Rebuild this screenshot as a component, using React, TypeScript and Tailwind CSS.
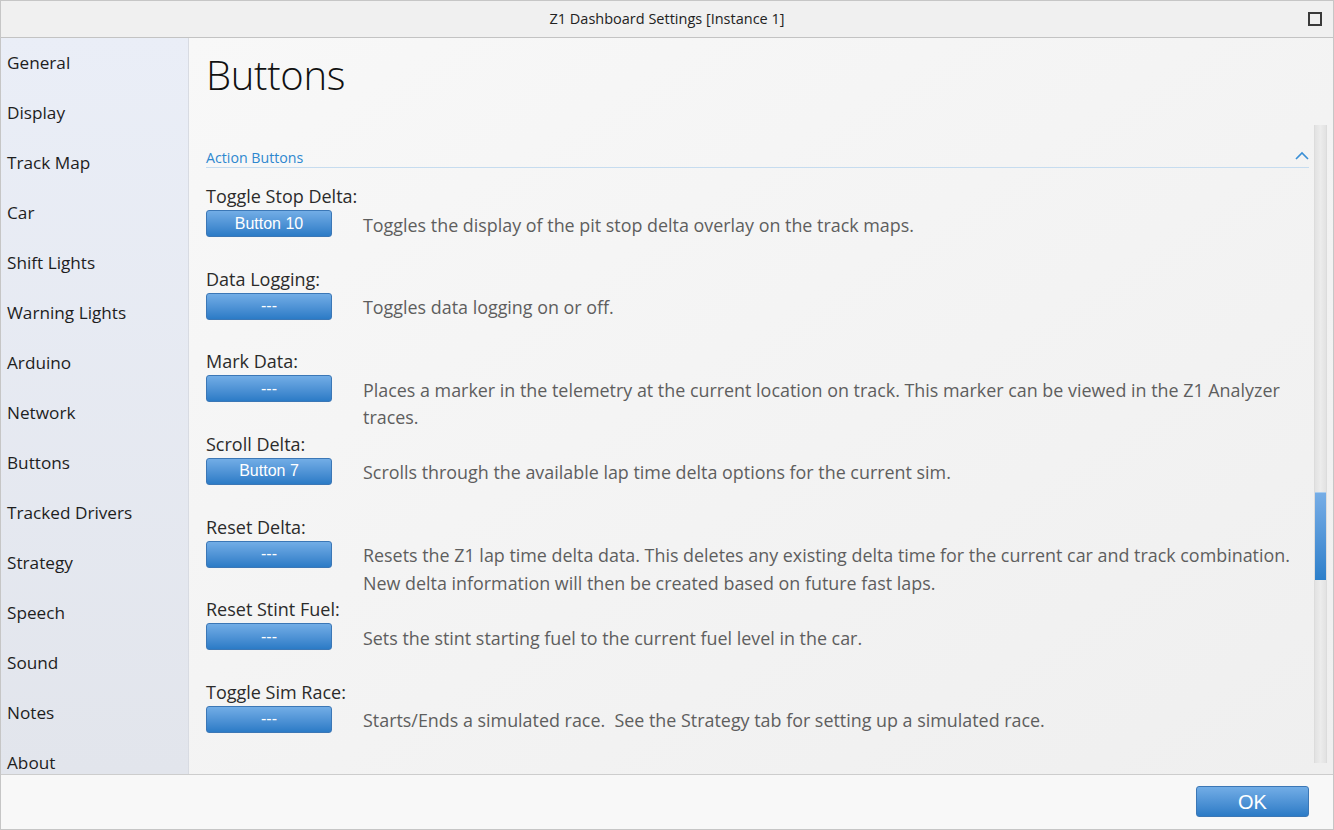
import React from "react";

const navItems = [
  "General",
  "Display",
  "Track Map",
  "Car",
  "Shift Lights",
  "Warning Lights",
  "Arduino",
  "Network",
  "Buttons",
  "Tracked Drivers",
  "Strategy",
  "Speech",
  "Sound",
  "Notes",
  "About",
];

const rows: { label: string; button: string; desc: string[] }[] = [
  { label: "Toggle Stop Delta:", button: "Button 10", desc: ["Toggles the display of the pit stop delta overlay on the track maps."] },
  { label: "Data Logging:", button: "---", desc: ["Toggles data logging on or off."] },
  {
    label: "Mark Data:",
    button: "---",
    desc: ["Places a marker in the telemetry at the current location on track. This marker can be viewed in the Z1 Analyzer", "traces."],
  },
  { label: "Scroll Delta:", button: "Button 7", desc: ["Scrolls through the available lap time delta options for the current sim."] },
  {
    label: "Reset Delta:",
    button: "---",
    desc: [
      "Resets the Z1 lap time delta data. This deletes any existing delta time for the current car and track combination.",
      "New delta information will then be created based on future fast laps.",
    ],
  },
  { label: "Reset Stint Fuel:", button: "---", desc: ["Sets the stint starting fuel to the current fuel level in the car."] },
  { label: "Toggle Sim Race:", button: "---", desc: ["Starts/Ends a simulated race.\u00a0 See the Strategy tab for setting up a simulated race."] },
];

export default function App() {
  return (
    <div
      className="w-[1334px] h-[830px] flex flex-col overflow-hidden border border-[#c6c6c6] bg-[#f4f4f4]"
      style={{ fontFamily: '"Open Sans", "Noto Sans", sans-serif' }}
    >
      {/* Title bar */}
      <div className="h-[37px] shrink-0 flex items-center justify-center relative bg-[#f0f0f0] border-b border-[#c3c3c3]">
        <span className="text-[14.5px] text-[#222]">Z1 Dashboard Settings [Instance 1]</span>
        <div className="absolute right-[11px] top-[11px] w-[14px] h-[14px] border-2 border-[#3a3a3a]" />
      </div>

      {/* Middle */}
      <div className="flex-1 flex min-h-0">
        {/* Sidebar */}
        <div className="w-[188px] shrink-0 bg-gradient-to-b from-[#eaeef7] to-[#e2e5ec] border-r border-[#d8dbe2] overflow-hidden">
          {navItems.map((n) => (
            <div key={n} className="h-[50px] flex items-center pl-[6px] text-[17.2px] text-[#1e1e1e]">
              {n}
            </div>
          ))}
        </div>

        {/* Content */}
        <div className="flex-1 flex flex-col min-w-0 bg-gradient-to-br from-[#f8f8f8] to-[#efefef]">
          <div className="h-[87px] shrink-0 pl-[17px] pt-[12px]">
            <div className="text-[40px] font-light leading-[50px] text-[#111] tracking-[-0.3px]">Buttons</div>
          </div>
          <div className="flex-1 flex min-h-0 pb-[11px]">
            <div className="flex-1 min-w-0 pl-[17px] pr-[5px] overflow-hidden">
              <div className="mt-[24px] h-[18px] flex items-center justify-between border-b border-[#c6dcef] box-content">
                <span className="text-[14.2px] text-[#2e87cf] leading-[18px] -mt-[1px]">Action Buttons</span>
                <svg width="14" height="9" viewBox="0 0 14 9" className="-mt-[6px]">
                  <path d="M1 8 L7 2 L13 8" fill="none" stroke="#3a8fd6" strokeWidth="1.6" />
                </svg>
              </div>
              <div className="mt-[16px]">
                {rows.map((r) => (
                  <div key={r.label} className="h-[82.67px]">
                    <div className="h-[26px] leading-[24px] text-[18px] text-[#2b2b2b]">{r.label}</div>
                    <div className="flex items-start">
                      <div
                        className="w-[126px] h-[27px] shrink-0 rounded-[3px] border border-[#3b77b6] bg-gradient-to-b from-[#72ade6] to-[#2b7bc6] flex items-center justify-center text-white text-[16px]"
                        style={{ fontFamily: '"Liberation Sans", Arial, sans-serif' }}
                      >
                        {r.button}
                      </div>
                      <div className="ml-[31px] mt-[1.5px] text-[17.9px] leading-[27.5px] text-[#5e5e5e]">
                        {r.desc.map((d, i) => (
                          <div key={i} className="whitespace-nowrap">
                            {d}
                          </div>
                        ))}
                      </div>
                    </div>
                  </div>
                ))}
              </div>
            </div>
            {/* Scrollbar */}
            <div className="w-[13px] shrink-0 mr-[6px] bg-gradient-to-r from-[#e2e2e2] via-[#ececec] to-[#e2e2e2] border-x border-[#dcdcdc] flex flex-col">
              <div className="h-[367px] shrink-0" />
              <div className="h-[88px] shrink-0 bg-gradient-to-b from-[#76ade6] to-[#2b7fca] border-t border-[#a8ccef]" />
            </div>
          </div>
        </div>
      </div>

      {/* Bottom bar */}
      <div className="h-[55px] shrink-0 bg-[#f8f8f8] border-t border-[#cdcdcd] flex items-start justify-end pr-[24px] pt-[11px]">
        <div
          className="w-[113px] h-[31px] rounded-[3px] border border-[#3b77b6] bg-gradient-to-b from-[#72ade6] to-[#2b7bc6] flex items-center justify-center text-white text-[20px]"
          style={{ fontFamily: '"Liberation Sans", Arial, sans-serif' }}
        >
          OK
        </div>
      </div>
    </div>
  );
}
